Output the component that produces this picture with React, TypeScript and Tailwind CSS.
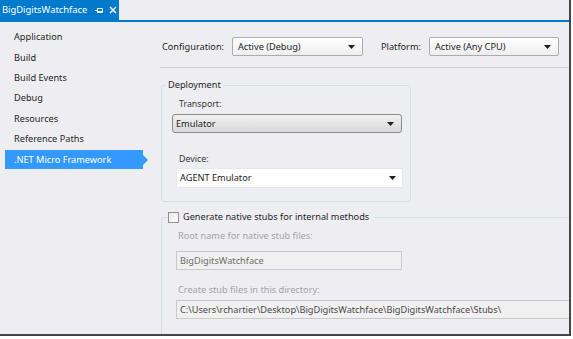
import React from "react";

const font = { fontFamily: '"Noto Sans", "Open Sans", sans-serif' };

function Arrow({ color = "#1e1e1e" }: { color?: string }) {
  return (
    <svg width="7" height="4" viewBox="0 0 7 4">
      <path d="M0 0 H7 L3.5 4 Z" fill={color} />
    </svg>
  );
}

export default function App() {
  const nav = ["Application", "Build", "Build Events", "Debug", "Resources", "Reference Paths"];
  return (
    <div className="w-[573px] h-[339px] bg-white text-[9.2px] leading-[14px] text-[#1e1e1e]" style={font}>
      <div className="w-[571px] h-[336px] border-r-2 border-b-2 border-[#454545] bg-[#eeeef2] overflow-hidden flex flex-col">
        {/* tab bar */}
        <div className="flex h-[20px] shrink-0">
          <div className="bg-[#007acc] text-white flex items-center pl-[2px] w-[119px]">
            <span className="text-[9.4px]">BigDigitsWatchface</span>
            <svg className="ml-[8px]" width="8" height="7" viewBox="0 0 8 7">
              <path d="M0 3.5 H2.5 M2.5 1 V6 M2.5 1.5 H7.5 V5.5 H2.5 M2.5 4.5 H7.5" stroke="white" strokeWidth="1" fill="none" />
            </svg>
            <svg className="ml-[6px]" width="8" height="8" viewBox="0 0 8 8">
              <path d="M1 1 L7 7 M7 1 L1 7" stroke="white" strokeWidth="1.5" />
            </svg>
          </div>
        </div>
        <div className="h-[2px] bg-[#007acc] shrink-0" />
        <div className="flex flex-1">
          {/* nav */}
          <div className="w-[160px] shrink-0 pt-[5px] flex flex-col">
            {nav.map((n) => (
              <div key={n} className="h-[20.4px] flex items-center pl-[14px]">
                {n}
              </div>
            ))}
            <div className="h-[20.4px] flex items-center">
              <div className="ml-[5px] w-[138px] h-[19px] bg-[#3399ff] text-white flex items-center pl-[9px]">
                .NET Micro Framework
              </div>
              <div className="w-0 h-0 border-y-[5px] border-y-transparent border-l-[5px] border-l-[#3399ff]" />
            </div>
          </div>
          {/* content */}
          <div className="flex-1 flex flex-col">
            <div className="h-[46px] shrink-0 flex items-start pt-[15px] border-b border-[#cccedb]">
              <div className="h-[19px] flex items-center ml-[2px] w-[70px]">Configuration:</div>
              <div className="w-[131px] h-[19px] flex items-center justify-between border border-[#acacac] rounded-[2px] bg-gradient-to-b from-[#ffffff] to-[#eeeeee] pl-[5px] pr-[7px]">
                <span>Active (Debug)</span>
                <Arrow />
              </div>
              <div className="h-[19px] flex items-center ml-[18px] w-[48px]">Platform:</div>
              <div className="w-[130px] h-[19px] flex items-center justify-between border border-[#acacac] rounded-[2px] bg-gradient-to-b from-[#ffffff] to-[#eeeeee] pl-[5px] pr-[7px]">
                <span>Active (Any CPU)</span>
                <Arrow />
              </div>
            </div>
            {/* deployment group */}
            <div className="mt-[17px] ml-[1px] w-[250px] h-[117px] shrink-0 border border-[#d5dfe5] rounded-[3px] relative px-[11px]">
              <span className="absolute -top-[8px] left-[4px] bg-[#eeeef2] px-[2px]">Deployment</span>
              <div className="mt-[11px] pl-[6px] text-[8.8px] text-[#333]">Transport:</div>
              <div className="mt-[3px] h-[19px] w-[230px] ml-[-1px] flex items-center justify-between border border-[#8a8a8a] rounded-[3px] bg-gradient-to-b from-[#f0f0f0] to-[#d9d9d9] pl-[3px] pr-[7px]">
                <span>Emulator</span>
                <Arrow />
              </div>
              <div className="mt-[19px] pl-[6px] text-[8.8px] text-[#333]">Device:</div>
              <div className="mt-[2px] ml-[3px] w-[227px] h-[20px] bg-white border border-[#e3e9ef] flex items-center justify-between pl-[3px] pr-[6px]">
                <span>AGENT Emulator</span>
                <Arrow />
              </div>
            </div>
            {/* stubs group */}
            <div className="mt-[15px] ml-[1px] flex-1 border-l border-t border-[#d5dfe5] rounded-tl-[3px] relative pl-[14px]">
              <div className="absolute -top-[8px] left-[6px] bg-[#eeeef2] pr-[6px] flex items-center">
                <div className="w-[11px] h-[11px] border border-[#8f8f8f] bg-gradient-to-br from-[#e8e8e8] to-[#ffffff]" />
                <span className="ml-[4px]">Generate native stubs for internal methods</span>
              </div>
              <div className="mt-[11px] pl-[2px] text-[#a2a4a5]">Root name for native stub files:</div>
              <div className="mt-[8px] w-[226px] h-[19px] border border-[#c9cacc] bg-[#f0f0f0] text-[#6d6d6d] flex items-center pl-[3px]">BigDigitsWatchface</div>
              <div className="mt-[13px] pl-[2px] text-[#a2a4a5]">Create stub files in this directory:</div>
              <div className="mt-[3px] w-[420px] h-[19px] border border-[#c9cacc] border-r-0 bg-[#f0f0f0] text-[#4a4a4a] flex items-center pl-[3px] whitespace-nowrap">
                C:\Users\rchartier\Desktop\BigDigitsWatchface\BigDigitsWatchface\Stubs\
              </div>
            </div>
          </div>
        </div>
      </div>
    </div>
  );
}
